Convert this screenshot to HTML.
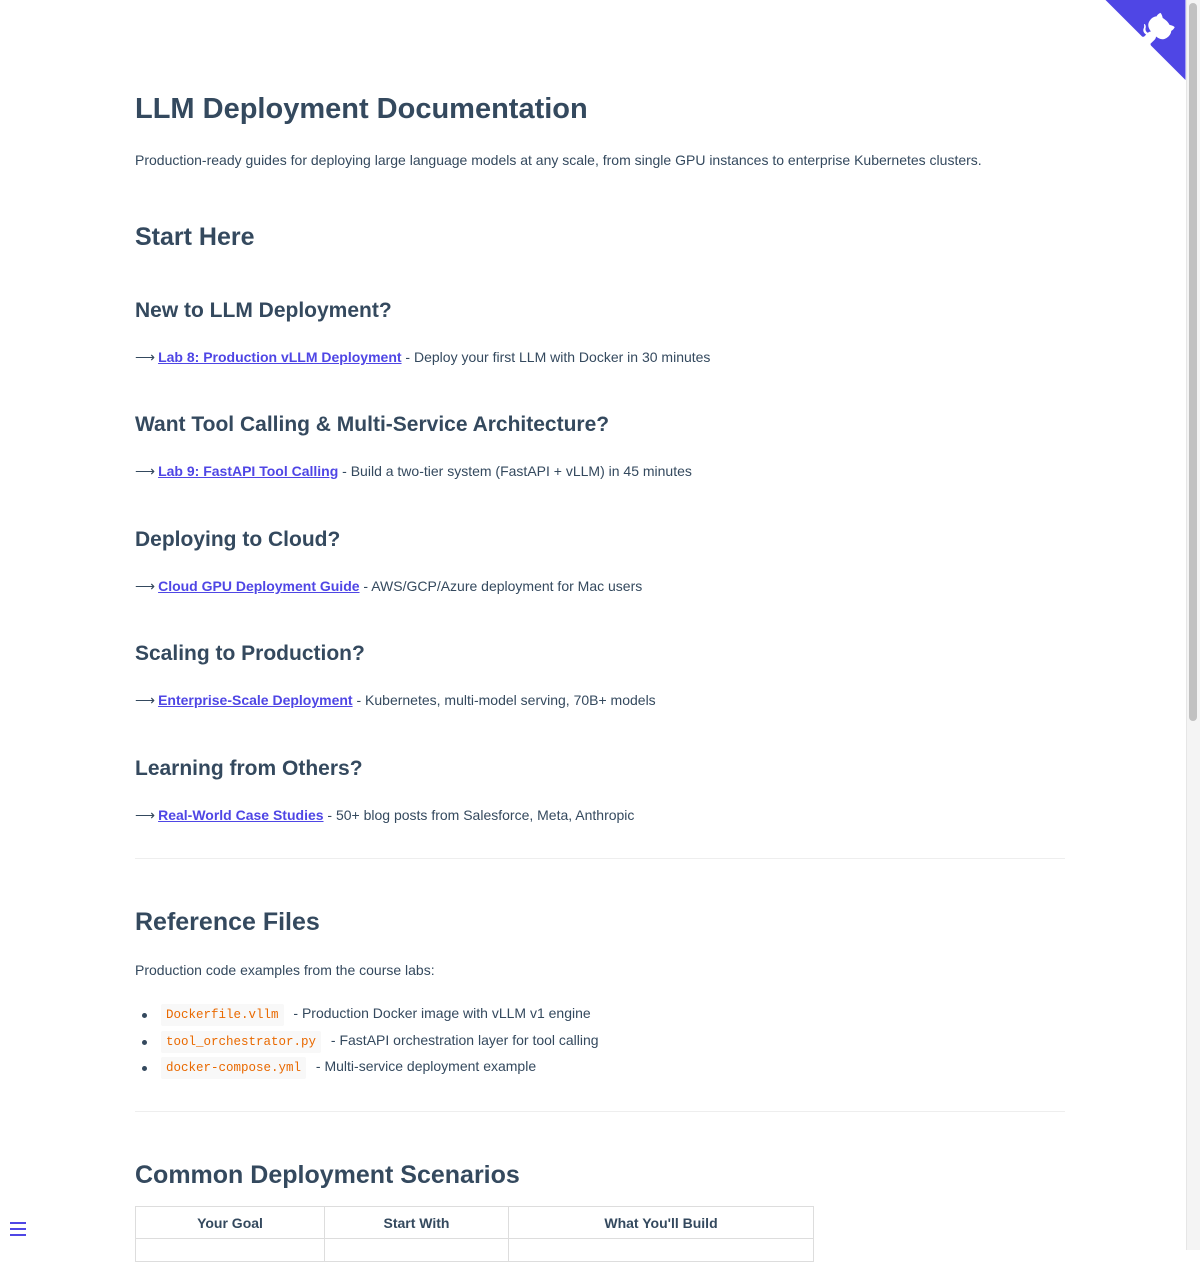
<!DOCTYPE html>
<html><head><meta charset="utf-8"><style>
body{margin:0;width:1200px;height:1250px;overflow:hidden;background:#fff;font-family:"Liberation Sans",sans-serif;color:#34495e;position:relative}
.a{position:absolute;left:135px;white-space:nowrap;line-height:1}
h1,h2,h3{margin:0;font-weight:600}
h1{font-size:29px}h2{font-size:25px}h3{font-size:21px}
.p{font-size:14px}
.ar{font-size:14px;margin-right:3px}
a{color:#4f46e5;font-weight:600;text-decoration:underline}
hr{position:absolute;left:135px;width:930px;margin:0;border:0;border-top:1px solid #eee}
code{font-family:"Liberation Mono",monospace;color:#e96900;background:#f8f8f8;font-size:12.5px;padding:4px 5px;border-radius:2px;margin-right:6px}
li{position:absolute;left:145px;font-size:14px;white-space:nowrap}
li:before{content:"";position:absolute;left:-3px;top:6px;width:5px;height:5px;border-radius:50%;background:#34495e}
li span{position:absolute;left:16px;top:-2px}
table{position:absolute;left:135px;top:1206px;border-collapse:collapse;font-size:14px}
th{border:1px solid #ddd;height:31px;font-weight:600;padding:0}
td{border:1px solid #ddd;height:20px}
</style></head><body>
<svg style="position:absolute;left:1105px;top:0" width="81" height="80" viewBox="0 0 250 250"><path d="M0,0 L115,115 L130,115 L142,142 L250,250 L250,0 Z" fill="#4f46e5"/><path d="M128.3,109.0 C113.8,99.7 119.0,89.6 119.0,89.6 C122.0,82.7 120.5,78.6 120.5,78.6 C119.2,72.0 123.4,76.3 123.4,76.3 C127.3,80.9 125.5,87.3 125.5,87.3 C122.9,97.6 130.6,101.9 134.4,103.2" fill="#fff"/><path d="M115.0,115.0 C114.9,115.1 118.7,116.5 119.8,115.4 L133.7,101.6 C136.9,99.2 139.9,98.4 142.2,98.6 C133.8,88.0 127.5,74.4 143.8,58.0 C148.5,53.4 154.0,51.2 159.7,51.0 C160.3,49.4 163.2,43.6 171.4,40.1 C171.4,40.1 176.1,42.5 178.8,56.2 C183.1,58.6 187.2,61.8 190.9,65.4 C194.5,69.0 197.7,73.2 200.1,77.6 C213.8,80.2 216.3,84.9 216.3,84.9 C212.7,93.1 206.9,96.0 205.4,96.6 C205.1,102.4 203.0,107.8 198.3,112.5 C181.9,128.9 168.3,122.5 157.7,114.1 C157.9,116.9 156.7,120.9 152.7,124.9 L141.0,136.5 C139.8,137.7 141.6,141.9 141.8,141.8 Z" fill="#fff"/></svg>
<div style="position:absolute;left:1186px;top:0;width:14px;height:1250px;background:#f4f4f4;border-left:1px solid #e6e6e6"></div>
<div style="position:absolute;left:1189px;top:3px;width:8px;height:718px;background:#c1c1c1;border-radius:4px"></div>
<h1 class="a" style="top:95px">LLM Deployment Documentation</h1>
<div class="a p" style="top:153px">Production-ready guides for deploying large language models at any scale, from single GPU instances to enterprise Kubernetes clusters.</div>
<h2 class="a" style="top:225px">Start Here</h2>
<h3 class="a" style="top:300px">New to LLM Deployment?</h3>
<div class="a p" style="top:350px"><span class="ar">⟶</span><a>Lab 8: Production vLLM Deployment</a> - Deploy your first LLM with Docker in 30 minutes</div>
<h3 class="a" style="top:414px">Want Tool Calling &amp; Multi-Service Architecture?</h3>
<div class="a p" style="top:464px"><span class="ar">⟶</span><a>Lab 9: FastAPI Tool Calling</a> - Build a two-tier system (FastAPI + vLLM) in 45 minutes</div>
<h3 class="a" style="top:529px">Deploying to Cloud?</h3>
<div class="a p" style="top:579px"><span class="ar">⟶</span><a>Cloud GPU Deployment Guide</a> - AWS/GCP/Azure deployment for Mac users</div>
<h3 class="a" style="top:643px">Scaling to Production?</h3>
<div class="a p" style="top:693px"><span class="ar">⟶</span><a>Enterprise-Scale Deployment</a> - Kubernetes, multi-model serving, 70B+ models</div>
<h3 class="a" style="top:758px">Learning from Others?</h3>
<div class="a p" style="top:808px"><span class="ar">⟶</span><a>Real-World Case Studies</a> - 50+ blog posts from Salesforce, Meta, Anthropic</div>
<hr style="top:858px">
<h2 class="a" style="top:910px">Reference Files</h2>
<div class="a p" style="top:963px">Production code examples from the course labs:</div>
<ul style="margin:0;padding:0;list-style:none">
<li style="top:1007px"><span><code>Dockerfile.vllm</code> - Production Docker image with vLLM v1 engine</span></li>
<li style="top:1034px"><span><code>tool_orchestrator.py</code> - FastAPI orchestration layer for tool calling</span></li>
<li style="top:1060px"><span><code>docker-compose.yml</code> - Multi-service deployment example</span></li>
</ul>
<hr style="top:1111px">
<h2 class="a" style="top:1163px">Common Deployment Scenarios</h2>
<table><tr><th style="width:188px">Your Goal</th><th style="width:183px">Start With</th><th style="width:304px">What You'll Build</th></tr><tr><td></td><td></td><td></td></tr></table>
<div style="position:absolute;left:10px;top:1222px;width:16px">
<div style="height:2px;background:#4f46e5;margin-bottom:4px"></div><div style="height:2px;background:#4f46e5;margin-bottom:4px"></div><div style="height:2px;background:#4f46e5"></div></div>
</body></html>
